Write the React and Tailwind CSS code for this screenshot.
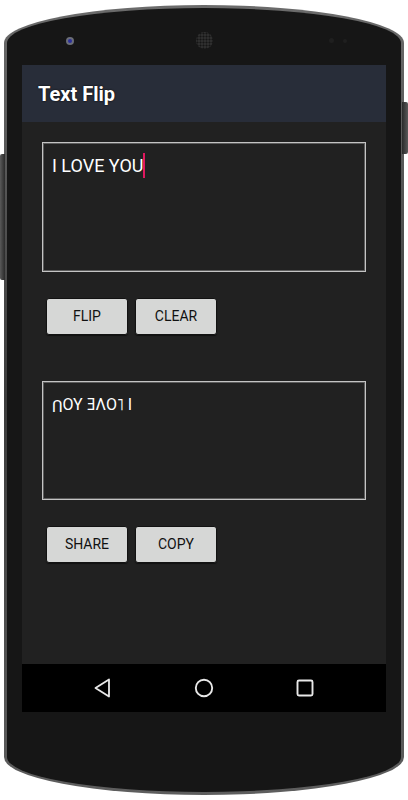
import { useState } from 'react';

function NavBar() {
    return (
        <div className="h-[48px] bg-black flex items-center justify-center gap-[77px]">
            <svg width="24" height="24" viewBox="0 0 24 24" fill="none">
                <path d="M18 3.5 L4.5 12 L18 20.5 Z" stroke="#e8e8e8" strokeWidth="1.8" strokeLinejoin="round" />
            </svg>
            <svg width="24" height="24" viewBox="0 0 24 24" fill="none">
                <circle cx="12" cy="12" r="8.2" stroke="#e8e8e8" strokeWidth="1.9" />
            </svg>
            <svg width="24" height="24" viewBox="0 0 24 24" fill="none">
                <rect x="4.5" y="4.5" width="15" height="15" rx="1.5" stroke="#e8e8e8" strokeWidth="1.9" />
            </svg>
        </div>
    );
}

function FlatButton({ label, onClick }) {
    return (
        <button
            onClick={onClick}
            className="w-[82px] h-[37px] rounded-[3px] border border-[#121212] bg-[#d6d7d6] text-[14px] text-[#111] shadow-[0_1px_1px_rgba(0,0,0,0.5)]"
        >
            {label}
        </button>
    );
}

function App() {
    const [text, setText] = useState('I LOVE YOU');
    const [flipped, setFlipped] = useState('OY ƎΛO˥ I');

    return (
        <div className="relative w-[408px] h-[800px] bg-white overflow-hidden" style={{ fontFamily: 'Roboto, "Noto Sans", "DejaVu Sans", sans-serif' }}>
            {/* side buttons */}
            <div className="absolute left-[402px] top-[102px] w-[6px] h-[52px] rounded-r-[2px] bg-gradient-to-r from-[#2a2a2a] to-[#5a5a5a]" />
            <div className="absolute left-0 top-[154px] w-[5px] h-[126px] rounded-l-[2px] bg-gradient-to-r from-[#5a5a5a] to-[#2a2a2a]" />

            <div className="ml-[4px] mt-[5px] w-[400px] h-[790px] rounded-[200px/38px] bg-gradient-to-b from-[#6b6b6b] via-[#3c3c3c] to-[#5e5e5e] p-[3px]">
                <div className="h-full rounded-[197px/35px] bg-[#161616] flex flex-col items-center">
                    {/* top bezel */}
                    <div className="w-full h-[57px]">
                        <div className="mt-[24px] h-[17px] flex items-center">
                            <div className="ml-[59px] w-[8px] h-[8px] rounded-full bg-[#6a6d78] flex items-center justify-center">
                                <div className="w-[4px] h-[4px] rounded-full bg-[#2b2f9a]" />
                            </div>
                            <div className="ml-[122px] w-[17px] h-[17px] rounded-full bg-[#2e2e2e] bg-[radial-gradient(circle,#151515_0.8px,transparent_1.2px)] bg-[length:3px_3px]" />
                            <div className="ml-[116px] w-[5px] h-[5px] rounded-full bg-[#1f1f1f]" />
                            <div className="ml-[9px] w-[4px] h-[4px] rounded-full bg-[#1f1f1f]" />
                        </div>
                    </div>

                    {/* screen */}
                    <div className="w-[364px] h-[647px] flex flex-col">
                        <div className="h-[57px] bg-[#282d39] flex items-center pl-[16px]">
                            <h1 className="text-[20px] font-bold text-white [text-shadow:0_0_2px_#000]">Text Flip</h1>
                        </div>

                        <div className="flex-1 bg-[#212121] px-[20px] pt-[20px]">
                            <div className="h-[130px] border border-[#c4c4c4] shadow-[inset_0_0_0_1px_#5c5c5c] pl-[9px] pt-[10px]">
                                <div className="flex items-center text-[18px] leading-[25px] text-white">
                                    <span>{text}</span>
                                    <span className="w-[2px] h-[25px] bg-[#e0185f]" />
                                </div>
                            </div>

                            <div className="mt-[26px] ml-[4px] flex gap-[7px]">
                                <FlatButton label="FLIP" onClick={() => setFlipped(text.split('').reverse().join(''))} />
                                <FlatButton label="CLEAR" onClick={() => { setText(''); setFlipped(''); }} />
                            </div>

                            <div className="mt-[46px] h-[119px] border border-[#c4c4c4] shadow-[inset_0_0_0_1px_#5c5c5c] pl-[9px] pt-[10px]">
                                <p className="text-[16px] leading-[25px] text-white">
                                    <span className="inline-block rotate-180 leading-none">U</span>{flipped}
                                </p>
                            </div>

                            <div className="mt-[26px] ml-[4px] flex gap-[7px]">
                                <FlatButton label="SHARE" />
                                <FlatButton label="COPY" />
                            </div>
                        </div>

                        <NavBar />
                    </div>
                </div>
            </div>
        </div>
    );
}

export default App;
